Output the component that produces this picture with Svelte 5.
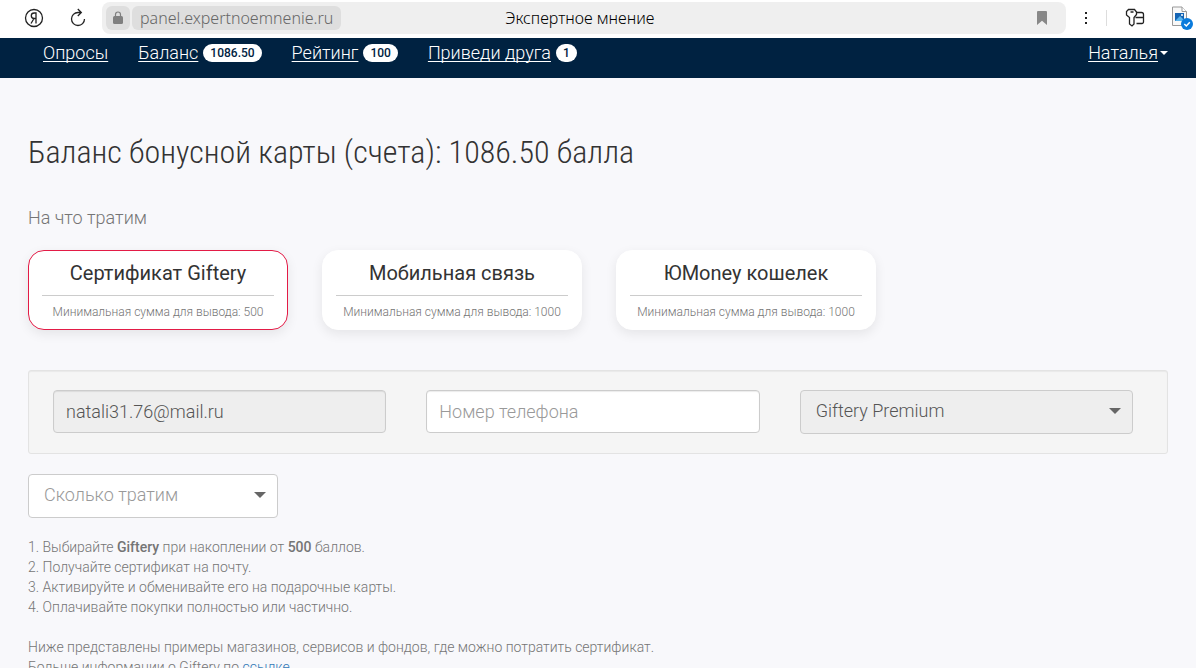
<script lang="ts">
    const links = [
        { label: "Опросы", badge: "" },
        { label: "Баланс", badge: "1086.50" },
        { label: "Рейтинг", badge: "100" },
        { label: "Приведи друга", badge: "1" },
    ];

    const targets = [
        { name: "Сертификат Giftery", min: 500 },
        { name: "Мобильная связь", min: 1000 },
        { name: "ЮMoney кошелек", min: 1000 },
    ];

    let selected = $state(0);
    let email = $state("natali31.76@mail.ru");
    let phone = $state("");
    let amount = $state("");
</script>

<div class="window">
    <header class="browser">
        <button class="tool yandex" aria-label="Яндекс">
            <svg width="20" height="20" viewBox="0 0 20 20">
                <circle cx="10" cy="10" r="8.5" />
                <path d="M12 15.500V5h-1.800C8.300 5 7.300 6.100 7.300 7.800c0 1.700 1 2.700 2.900 2.700H12M10 10.500L7 15.500" />
            </svg>
        </button>
        <button class="tool reload" aria-label="Обновить">
            <svg width="20" height="20" viewBox="0 0 20 20">
                <path d="M16.500 11A6.500 6.500 0 1 1 10 4.500h3M9.800 1L13.300 4.500l-3.500 3.500" />
            </svg>
        </button>
        <div class="address">
            <button class="lock" aria-label="Защищённое соединение">
                <svg width="12" height="14" viewBox="0 0 12 14">
                    <rect x="1" y="5" width="10" height="8" rx="1.500" fill="#808080" />
                    <path d="M3.500 6V3.500a2.500 2.500 0 0 1 5 0V6" fill="none" stroke="#808080" stroke-width="1.200" />
                </svg>
            </button>
            <span class="host">panel.expertnoemnenie.ru</span>
            <span class="title">Экспертное мнение</span>
            <button class="mark" aria-label="В закладки">
                <svg width="10" height="14" viewBox="0 0 10 14">
                    <path d="M1 0h8a1 1 0 0 1 1 1v13L5 9.800 0 14V1a1 1 0 0 1 1-1z" fill="#888" />
                </svg>
            </button>
        </div>
        <button class="tool more" aria-label="Меню">
            <svg width="4" height="14" viewBox="0 0 4 14">
                <path d="M1 1h2v2H1zM1 6h2v2H1zM1 11h2v2H1z" fill="#222" stroke="none" />
            </svg>
        </button>
        <span class="divider"></span>
        <button class="tool keys" aria-label="Пароли">
            <svg width="20" height="20" viewBox="0 0 20 20">
                <path d="M3.500 1.500h6L11.500 4v2.500L9 9.500V16l-2 2-2.500-2V9.500L1.500 7V3.500zM5.500 4h3" />
                <path d="M11.500 4.500h5a2 2 0 0 1 2 2v7.500a1.500 1.500 0 0 1-1.500 1.500h-5.500M10.500 9.500h8" />
            </svg>
        </button>
        <button class="tool picture" aria-label="Изображение">
            <svg width="22" height="24" viewBox="0 0 22 24">
                <path d="M1.500 1h9.500l4.500 4.500v14h-14z" fill="#f8f8f8" stroke="#999" stroke-width="1" />
                <path d="M11 1v4.500h4.500" fill="#fff" stroke="#999" stroke-width="1" />
                <rect x="4" y="7" width="9" height="8" fill="#1464b4" stroke="none" />
                <path d="M4 15l5-5 4 4v1z" fill="#58b4ee" stroke="none" />
                <circle cx="11" cy="9" r="1" fill="#fff" stroke="none" />
                <circle cx="16" cy="18" r="6" fill="#0a7bdc" stroke="none" />
                <path d="M13.300 18l2 2 3.500-3.800" fill="none" stroke="#fff" stroke-width="1.500" />
            </svg>
        </button>
    </header>

    <div class="page">
        <nav>
            {#each links as link}
                <div class="item">
                    <a href="#top">{link.label}</a>
                    {#if link.badge}
                        <span class="badge">{link.badge}</span>
                    {/if}
                </div>
            {/each}
            <div class="item user">
                <a href="#user">Наталья</a>
                <span class="caret"></span>
            </div>
        </nav>

        <main>
            <h1>Баланс бонусной карты (счета): 1086.50 балла</h1>
            <h2>На что тратим</h2>

            <div class="cards">
                {#each targets as target, i}
                    <button class="card" class:active={selected === i} onclick={() => (selected = i)}>
                        <span class="name">{target.name}</span>
                        <span class="min">Минимальная сумма для вывода: {target.min}</span>
                    </button>
                {/each}
            </div>

            <div class="well">
                <input type="email" aria-label="Почта" bind:value={email} readonly />
                <input type="tel" aria-label="Номер телефона" placeholder="Номер телефона" bind:value={phone} />
                <div class="select filled">
                    <select aria-label="Сертификат">
                        <option>Giftery Premium</option>
                    </select>
                    <span class="arrow"></span>
                </div>
            </div>

            <div class="select amount">
                <select aria-label="Сколько тратим" bind:value={amount}>
                    <option value="">Сколько тратим</option>
                    <option value="500">500</option>
                    <option value="1000">1000</option>
                </select>
                <span class="arrow"></span>
            </div>

            <p>
                1. Выбирайте <b>Giftery</b> при накоплении от <b>500</b> баллов.<br />
                2. Получайте сертификат на почту.<br />
                3. Активируйте и обменивайте его на подарочные карты.<br />
                4. Оплачивайте покупки полностью или частично.
            </p>
            <p>
                Ниже представлены примеры магазинов, сервисов и фондов, где можно потратить сертификат.<br />
                Больше информации о Giftery по <a href="#giftery">ссылке</a>.
            </p>
        </main>
    </div>
</div>

<style>
    :global(body) {
        margin: 0;
        background: #f8f8fb;
    }

    .window {
        display: flex;
        flex-direction: column;
        height: 100vh;
        font-family: Roboto, "Liberation Sans", sans-serif;
        font-weight: 300;
        color: #757575;
    }

    .window * {
        box-sizing: border-box;
    }

    button,
    input,
    select {
        margin: 0;
        font: inherit;
        color: inherit;
    }

    button {
        border: 0;
        padding: 0;
        background: none;
        cursor: pointer;
    }

    .browser {
        display: flex;
        align-items: center;
        flex: none;
        height: 38px;
        padding: 0 3px 2px 24px;
        background: #fff;
        font-family: "Noto Sans", sans-serif;
        font-size: 16px;
    }

    .tool {
        display: flex;
        flex: none;
    }

    .tool svg {
        fill: none;
        stroke: #222;
        stroke-width: 1.3;
    }

    .reload {
        margin: 0 14px 0 24px;
    }

    .address {
        display: flex;
        align-items: center;
        flex: 1;
        height: 32px;
        padding: 0 19px 0 4px;
        border-radius: 8px;
        background: #efefef;
    }

    .lock {
        display: flex;
        align-items: center;
        justify-content: center;
        width: 24px;
        height: 24px;
        border-radius: 6px;
        background: #dedede;
    }

    .host {
        margin-left: 2px;
        padding: 0 8px;
        border-radius: 6px;
        background: #dedede;
        color: #666;
        line-height: 24px;
    }

    .title {
        flex: 1;
        padding-left: 164px;
        color: #000;
    }

    .mark {
        display: flex;
    }

    .more {
        margin-left: 18px;
    }

    .divider {
        width: 1px;
        height: 16px;
        margin: 0 18px;
        background: #ddd;
    }

    .picture {
        margin-left: 26px;
    }

    .page {
        flex: 1;
        min-height: 0;
        overflow-y: auto;
        scrollbar-width: none;
    }

    nav {
        display: flex;
        gap: 30px;
        height: 40px;
        padding: 4px 28px 0 43px;
        background: #002241;
        color: #fff;
        font-size: 18px;
        line-height: 22px;
    }

    .item {
        display: flex;
        align-items: center;
        gap: 5px;
        height: 22px;
    }

    .item a {
        color: #fff;
        text-decoration-skip-ink: none;
        text-underline-offset: 2px;
    }

    .badge {
        padding: 0 7px;
        border-radius: 9px;
        background: #fff;
        color: #002241;
        font-size: 12px;
        font-weight: 500;
        line-height: 18px;
    }

    .user {
        gap: 2px;
        margin-left: auto;
    }

    .caret {
        border: 4px solid transparent;
        border-top-color: #fff;
        border-bottom: 0;
    }

    main {
        padding: 54px 28px 20px;
    }

    h1 {
        margin: 0;
        color: #333;
        font-family: "Roboto Condensed", Roboto, sans-serif;
        font-size: 32px;
        font-weight: 300;
        line-height: 40px;
    }

    h2 {
        margin: 34px 0 20px;
        font-size: 18px;
        font-weight: 300;
        line-height: 24px;
    }

    .cards {
        display: flex;
        gap: 34px;
    }

    .card {
        display: flex;
        flex-direction: column;
        width: 260px;
        height: 80px;
        padding: 0 13px;
        border: 1px solid #fff;
        border-radius: 16px;
        background: #fff;
        box-shadow: 0 4px 12px rgba(0, 0, 0, 0.08);
    }

    .card.active {
        border-color: #e31b46;
    }

    .name {
        align-self: stretch;
        padding: 10px 0;
        border-bottom: 1px solid #ccc;
        color: #333;
        font-size: 20px;
        font-weight: 400;
        line-height: 24px;
    }

    .min {
        align-self: center;
        padding-top: 8px;
        font-size: 12px;
        line-height: 16px;
    }

    .well {
        display: grid;
        grid-template-columns: repeat(3, 1fr);
        align-items: start;
        gap: 40px;
        margin: 40px 0 20px;
        padding: 19px 34px 19px 24px;
        border: 1px solid #e3e3e3;
        border-radius: 3px;
        background: #f5f5f5;
        box-shadow: inset 0 1px 1px rgba(0, 0, 0, 0.05);
    }

    input {
        width: 100%;
        height: 43px;
        padding: 0 12px;
        border: 1px solid #ccc;
        border-radius: 4px;
        background: #fff;
        box-shadow: inset 0 1px 1px rgba(0, 0, 0, 0.08);
        color: #555;
        font-size: 18px;
    }

    input::placeholder {
        color: #999;
        opacity: 1;
    }

    input[readonly] {
        background: #eee;
    }

    .select {
        display: grid;
        align-items: center;
    }

    .select > * {
        grid-area: 1 / 1;
    }

    select {
        width: 100%;
        height: 44px;
        padding: 0 15px 4px;
        border: 1px solid #ccc;
        border-radius: 4px;
        background: #fff;
        color: #999;
        font-size: 18px;
        appearance: none;
    }

    .filled select {
        background: #eee;
        color: #555;
    }

    .arrow {
        justify-self: end;
        margin: 0 12px 2px 0;
        border: 6px solid transparent;
        border-top-color: #666;
        border-bottom: 0;
        pointer-events: none;
    }

    .amount {
        width: 250px;
        margin-bottom: 19px;
    }

    p {
        margin: 0 0 20px;
        font-size: 14px;
        line-height: 20px;
    }

    b {
        font-weight: 500;
    }

    p a {
        color: #337ab7;
        text-decoration: none;
    }
</style>
